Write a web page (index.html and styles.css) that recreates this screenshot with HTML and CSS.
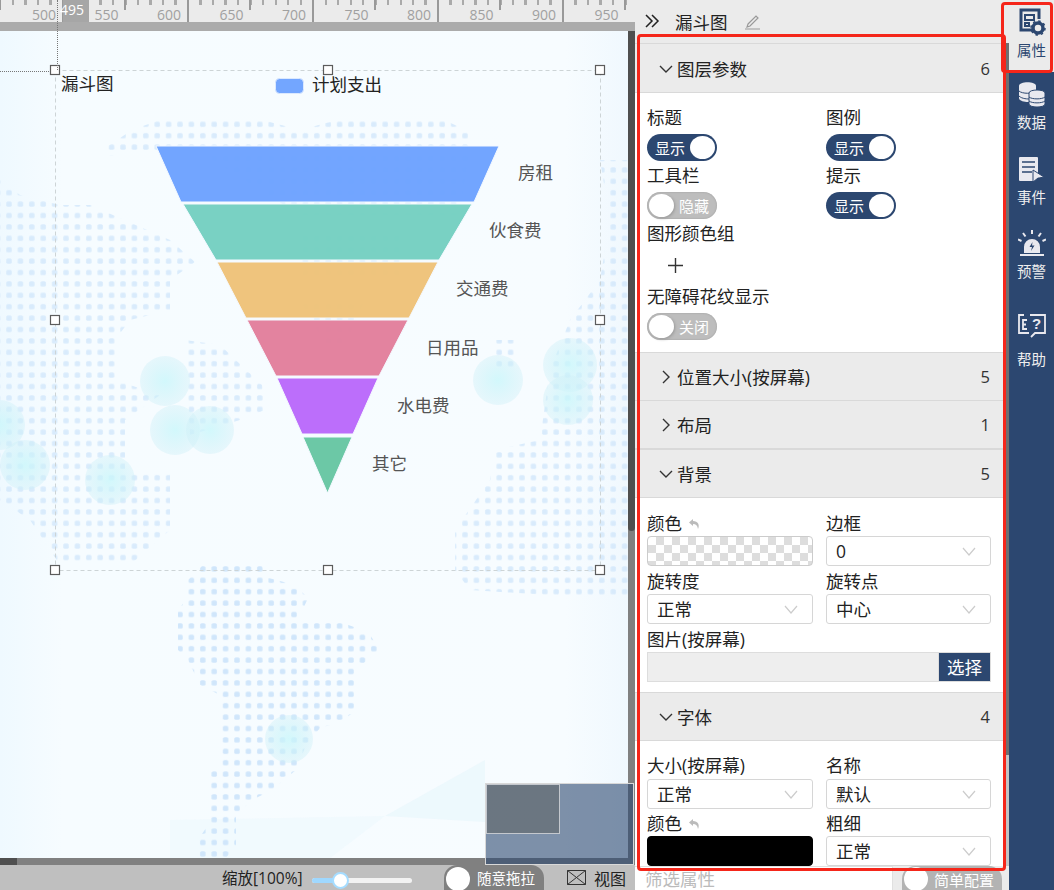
FILE: index.html
```html
<!DOCTYPE html>
<html lang="zh-CN">
<head>
    <meta charset="UTF-8">
    <title>漏斗图</title>
    <link rel="stylesheet" href="styles.css">
</head>
<body>
<div class="app">
    <div class="stage">
        <div class="ruler">
            <span>500</span><span>550</span><span>600</span><span>650</span><span>700</span>
            <span>750</span><span>800</span><span>850</span><span>900</span><span>950</span>
        </div>
        <div class="ruler-band"></div>
        <div class="canvas-row">
            <div class="canvas">
                <svg class="chart" viewBox="0 31 628 827" width="628" height="827">
                    <defs>
                        <pattern id="dots" width="11.4" height="11.4" patternUnits="userSpaceOnUse" patternTransform="translate(3.3 4.6)">
                            <rect x="3" y="3" width="5.4" height="5.4" rx="1.500" fill="#d0e6fb"/>
                        </pattern>
                        <linearGradient id="sky" x1="0" y1="0" x2="1" y2="0">
                            <stop offset="0" stop-color="#eff9ff"/>
                            <stop offset="0.1" stop-color="#f6fcff"/>
                            <stop offset="0.9" stop-color="#f7fcff"/>
                            <stop offset="1" stop-color="#f0f8fe"/>
                        </linearGradient>
                        <radialGradient id="glow">
                            <stop offset="0" stop-color="#c9f7fb" stop-opacity="0.8"/>
                            <stop offset="1" stop-color="#cdeff7" stop-opacity="0.4"/>
                        </radialGradient>
                        <filter id="soft" x="0" y="0" width="100%" height="100%">
                            <feGaussianBlur stdDeviation="0.6"/>
                        </filter>
                    </defs>
                    <rect x="0" y="31" width="628" height="827" fill="url(#sky)"/>
                    <polygon points="170,820 385,816 330,858 170,858" fill="#e6f6fc" fill-opacity="0.3"/>
                    <polygon points="385,816 485,760 485,822" fill="#e3f5fc" fill-opacity="0.5"/>
                    <g fill="url(#dots)" filter="url(#soft)" opacity="0.75">
                        <!-- top continent, seen through the funnel as well -->
                        <polygon points="165,118 255,118 300,130 345,118 440,118 470,132 470,145 460,215 300,215 190,146 108,156 108,146 132,130"/>
                        <polygon points="300,232 400,232 400,276 300,276"/>
                        <polygon points="300,300 365,300 345,345 325,345"/>
                        <!-- left continent -->
                        <polygon points="0,180 20,195 60,205 90,205 170,240 195,262 170,280 170,310 130,320 115,340 115,380 160,395 125,420 125,470 170,470 170,530 130,565 60,565 30,520 0,500"/>
                        <polygon points="185,340 220,345 262,385 265,410 240,420 190,435"/>
                        <!-- right continent -->
                        <polygon points="600,160 628,160 628,600 470,590 455,570 455,530 490,480 495,450 540,440 550,370 570,320 600,280 610,220"/>
                        <polygon points="495,340 515,340 515,370 495,370"/>
                    </g>
                    <g fill="url(#dots)" filter="url(#soft)">
                        <!-- lower continent -->
                        <polygon points="203,565 262,565 265,577 295,585 308,598 298,620 340,622 368,632 380,650 365,662 354,675 354,712 340,722 320,728 306,745 296,770 272,790 252,800 236,815 236,845 226,858 198,858 198,840 208,825 208,775 220,765 220,695 200,685 188,660 178,650 178,610 186,600 186,582"/>
                    </g>
                    <g fill="url(#glow)">
                        <circle cx="165" cy="381" r="25"/>
                        <circle cx="175" cy="430" r="25"/>
                        <circle cx="210" cy="430" r="24"/>
                        <circle cx="25" cy="465" r="25"/>
                        <circle cx="110" cy="480" r="25"/>
                        <circle cx="0" cy="425" r="25"/>
                        <circle cx="498" cy="380" r="25"/>
                        <circle cx="570" cy="365" r="27"/>
                        <circle cx="568" cy="400" r="25"/>
                        <circle cx="289" cy="739" r="24"/>
                    </g>

                    <g stroke="#f4f9ff" stroke-width="1" fill-opacity="0.97">
                        <polygon points="156,146 499,146 474,202 181,202" fill="#6da2ff"/>
                        <polygon points="183,204 472,204 439,260 216,260" fill="#75d0c1"/>
                        <polygon points="217,262 438,262 409,318 246,318" fill="#eec279"/>
                        <polygon points="247,320 408,320 379,376 276,376" fill="#e27f9c"/>
                        <polygon points="277,378 378,378 353,434 302,434" fill="#ba69fb"/>
                        <polygon points="303,437 352,437 327.5,493" fill="#67c6a3"/>
                    </g>
                    <g class="funnel-labels">
                        <text x="518" y="179">房租</text>
                        <text x="489" y="237">伙食费</text>
                        <text x="456" y="295">交通费</text>
                        <text x="426" y="354">日用品</text>
                        <text x="397" y="412">水电费</text>
                        <text x="372" y="470">其它</text>
                    </g>
                    <text class="chart-title" x="61" y="90">漏斗图</text>
                    <rect x="275.500" y="78.500" width="28" height="15" rx="4" fill="#73a6ff" stroke="#dbe9ff"/>
                    <text class="chart-title" x="312" y="91">计划支出</text>

                    <rect x="55.500" y="70.500" width="545" height="500" fill="none" stroke="#cdd4d6" stroke-dasharray="4 3"/>
                    <path d="M0 71.500H55" stroke="#777" stroke-dasharray="1 1" fill="none"/>
                    <g fill="#fff" stroke="#5c5c5c" stroke-width="1.200">
                        <rect x="50.500" y="65.500" width="9" height="9"/>
                        <rect x="323.500" y="65.500" width="9" height="9"/>
                        <rect x="595.500" y="65.500" width="9" height="9"/>
                        <rect x="50.500" y="315.500" width="9" height="9"/>
                        <rect x="595.500" y="315.500" width="9" height="9"/>
                        <rect x="50.500" y="565.500" width="9" height="9"/>
                        <rect x="323.500" y="565.500" width="9" height="9"/>
                        <rect x="595.500" y="565.500" width="9" height="9"/>
                    </g>
                </svg>
            </div>
            <div class="vbar"><div class="vbar-thumb"></div></div>
        </div>
        <div class="hbar"><div class="hbar-thumb"></div></div>
        <div class="statusbar">
            <span class="zoom-text">缩放[100%]</span>
            <div class="slider"><div class="slider-fill"></div><div class="slider-knob"></div></div>
            <div class="drag-toggle"><i class="knob"></i>随意拖拉</div>
            <svg class="view-icon" width="19" height="15" viewBox="0 0 19 15">
                <path d="M.5.5h18v14H.5zM.5.5l18 14M18.5.5L.5 14.5" fill="none" stroke="#333"/>
            </svg>
            <span class="view-text">视图</span>
        </div>
        <div class="guide-v"></div>
        <div class="ruler-badge">495</div>
        <div class="minimap"><div class="minimap-view"></div></div>
    </div>

    <div class="panel">
        <div class="panel-top">
            <svg width="16" height="14" viewBox="0 0 16 14"><path d="M2 1l6 6-6 6M8 1l6 6-6 6" fill="none" stroke="#222" stroke-width="1.5"/></svg>
            <span class="panel-name">漏斗图</span>
            <svg width="17" height="17" viewBox="0 0 17 17"><path d="M4 11l8-8 2 2-8 8-3 1zM1 16h15" fill="none" stroke="#999" stroke-width="1.2"/></svg>
        </div>
        <div class="props">
            <div class="sec-head first">
                <svg class="chev" width="14" height="14" viewBox="0 0 14 14"><path d="M1 4l6 6 6-6"/></svg>
                <span class="sec-title">图层参数</span><span class="sec-count">6</span>
            </div>
            <div class="sec-body layer-body">
                <div class="field-grid">
                    <div class="field">
                        <label>标题</label>
                        <div class="switch on">显示<i class="knob"></i></div>
                    </div>
                    <div class="field">
                        <label>图例</label>
                        <div class="switch on">显示<i class="knob"></i></div>
                    </div>
                    <div class="field">
                        <label>工具栏</label>
                        <div class="switch"><i class="knob"></i>隐藏</div>
                    </div>
                    <div class="field">
                        <label>提示</label>
                        <div class="switch on">显示<i class="knob"></i></div>
                    </div>
                </div>
                <label>图形颜色组</label>
                <div class="plus-row">
                    <svg width="15" height="15" viewBox="0 0 15 15"><path d="M7.5 0v15M0 7.5h15" stroke="#333" stroke-width="1.4"/></svg>
                </div>
                <label>无障碍花纹显示</label>
                <div class="switch"><i class="knob"></i>关闭</div>
            </div>

            <div class="sec-head">
                <svg class="chev" width="14" height="14" viewBox="0 0 14 14"><path d="M4 1l6 6-6 6"/></svg>
                <span class="sec-title">位置大小(按屏幕)</span><span class="sec-count">5</span>
            </div>
            <div class="sec-head">
                <svg class="chev" width="14" height="14" viewBox="0 0 14 14"><path d="M4 1l6 6-6 6"/></svg>
                <span class="sec-title">布局</span><span class="sec-count">1</span>
            </div>
            <div class="sec-head second">
                <svg class="chev" width="14" height="14" viewBox="0 0 14 14"><path d="M1 4l6 6 6-6"/></svg>
                <span class="sec-title">背景</span><span class="sec-count">5</span>
            </div>
            <div class="sec-body bg-body">
                <div class="field-grid">
                    <div class="field">
                        <label>颜色 <svg class="undo" width="13" height="13" viewBox="0 0 13 13"><path d="M5 1L1 4.5 5 8V6c3 0 4.500 1.500 5 5 2-4 0-8-5-8z" fill="#bbb"/></svg></label>
                        <div class="swatch checker"></div>
                    </div>
                    <div class="field">
                        <label>边框</label>
                        <div class="select">0<svg class="sel-arrow" width="14" height="9" viewBox="0 0 14 9"><path d="M1 1l6 7 6-7"/></svg></div>
                    </div>
                    <div class="field">
                        <label>旋转度</label>
                        <div class="select">正常<svg class="sel-arrow" width="14" height="9" viewBox="0 0 14 9"><path d="M1 1l6 7 6-7"/></svg></div>
                    </div>
                    <div class="field">
                        <label>旋转点</label>
                        <div class="select">中心<svg class="sel-arrow" width="14" height="9" viewBox="0 0 14 9"><path d="M1 1l6 7 6-7"/></svg></div>
                    </div>
                </div>
                <label>图片(按屏幕)</label>
                <div class="file-row">
                    <div class="file-input"></div>
                    <div class="file-btn">选择</div>
                </div>
            </div>

            <div class="sec-head">
                <svg class="chev" width="14" height="14" viewBox="0 0 14 14"><path d="M1 4l6 6 6-6"/></svg>
                <span class="sec-title">字体</span><span class="sec-count">4</span>
            </div>
            <div class="sec-body font-body">
                <div class="field-grid">
                    <div class="field">
                        <label>大小(按屏幕)</label>
                        <div class="select">正常<svg class="sel-arrow" width="14" height="9" viewBox="0 0 14 9"><path d="M1 1l6 7 6-7"/></svg></div>
                    </div>
                    <div class="field">
                        <label>名称</label>
                        <div class="select">默认<svg class="sel-arrow" width="14" height="9" viewBox="0 0 14 9"><path d="M1 1l6 7 6-7"/></svg></div>
                    </div>
                    <div class="field">
                        <label>颜色 <svg class="undo" width="13" height="13" viewBox="0 0 13 13"><path d="M5 1L1 4.5 5 8V6c3 0 4.500 1.500 5 5 2-4 0-8-5-8z" fill="#bbb"/></svg></label>
                        <div class="swatch black"></div>
                    </div>
                    <div class="field">
                        <label>粗细</label>
                        <div class="select">正常<svg class="sel-arrow" width="14" height="9" viewBox="0 0 14 9"><path d="M1 1l6 7 6-7"/></svg></div>
                    </div>
                </div>
            </div>
            <div class="props-scroll"></div>
        </div>
        <div class="filter-bar">
            <div class="filter-input">筛选属性</div>
            <div class="simple-toggle"><i class="knob"></i>简单配置</div>
        </div>
    </div>

    <div class="nav">
        <div class="nav-item active">
            <svg width="28" height="28" viewBox="0 0 28 28">
                <path d="M14 22H3V2h18v9" fill="none" stroke="#2c4770" stroke-width="3"/>
                <path d="M7 7h9v5H7zM7 15h4v3H7z" fill="none" stroke="#2c4770" stroke-width="2"/>
                <circle cx="20" cy="20" r="5" fill="none" stroke="#2c4770" stroke-width="3.500"/>
                <circle cx="20" cy="20" r="7" fill="none" stroke="#2c4770" stroke-width="1.500" stroke-dasharray="2.500 3"/>
            </svg>
            <span>属性</span>
        </div>
        <div class="nav-item">
            <svg width="28" height="26" viewBox="0 0 28 26">
                <path d="M1 4c0-5 17-5 17 0v12c0 3-6 4-8.500 4S1 19 1 16z" fill="#e9e9ef"/>
                <path d="M1 9c3 3 14 3 17 0M1 14c3 3 9 3 11 3" fill="none" stroke="#2c4770"/>
                <path d="M11 11c0-4 16-4 16 0v11c0 4-16 4-16 0z" fill="#e9e9ef" stroke="#2c4770"/>
                <path d="M11 15c3 2.500 13 2.500 16 0M11 19c3 2.500 13 2.500 16 0" fill="none" stroke="#2c4770"/>
            </svg>
            <span>数据</span>
        </div>
        <div class="nav-item">
            <svg width="28" height="27" viewBox="0 0 28 27">
                <path d="M2 1h17a1 1 0 0 1 1 1v17l-4 6H2a1 1 0 0 1-1-1V2a1 1 0 0 1 1-1z" fill="#e9e9ef"/>
                <path d="M4 6h13M4 11h13M4 16h10" stroke="#2c4770" stroke-width="1.500"/>
                <path d="M15 14l11 7-5 1-1 0-5 4z" fill="#e9e9ef" stroke="#2c4770"/>
            </svg>
            <span>事件</span>
        </div>
        <div class="nav-item">
            <svg width="28" height="27" viewBox="0 0 28 27">
                <path d="M6 23v-6a8 8 0 0 1 16 0v6zM2 24h24v2H2z" fill="#e9e9ef"/>
                <path d="M14.500 12l-3 5h2.500l-1 4 3.500-5.500h-2.500z" fill="#2c4770"/>
                <path d="M14 0v4M5 3l2.500 3.500M23 3l-2.500 3.500M0 9.500l3.500 1.500M28 9.500L24.500 11" stroke="#e9e9ef" stroke-width="2"/>
            </svg>
            <span>预警</span>
        </div>
        <div class="nav-item help">
            <svg width="28" height="25" viewBox="0 0 28 25">
                <path d="M6 1H1v18h10M12 1h15v18H17l-4 4" fill="none" stroke="#e9e9ef" stroke-width="1.800"/>
                <path d="M9 6H5v9h4M5 10.500h3" fill="none" stroke="#e9e9ef" stroke-width="1.800"/>
                <text class="help-mark" x="14" y="15">?</text>
            </svg>
            <span>帮助</span>
        </div>
    </div>

    <div class="mark mark-props"></div>
    <div class="mark mark-tab"></div>
</div>
</body>
</html>
```

FILE: styles.css
```css
* {
    margin: 0;
    padding: 0;
    box-sizing: border-box;
}

body {
    font-family: "Open Sans", "Noto Sans CJK SC", sans-serif;
    font-size: 17.5px;
    color: #222;
    overflow: hidden;
}

.app {
    position: relative;
    display: flex;
    width: 1054px;
    height: 890px;
    overflow: hidden;
}

/* left side: ruler, canvas, status */
.stage {
    position: relative;
    display: flex;
    flex-direction: column;
    width: 635px;
    flex: none;
}

.ruler {
    display: flex;
    height: 22px;
    padding-left: 0.5px;
    background-color: #ebebeb;
    background-image:
        repeating-linear-gradient(90deg, #999 0 2px, transparent 2px 125px),
        repeating-linear-gradient(90deg, #999 0 2px, transparent 2px 62.5px),
        repeating-linear-gradient(90deg, #aaa 0 2px, transparent 2px 12.5px);
    background-size: 100% 100%, 100% 10px, 100% 5px;
    background-position: 62px 0, -0.5px 0, -0.5px 0;
    background-repeat: no-repeat;
    font-size: 14px;
    line-height: 19px;
    color: #a0a0a0;
}

.ruler span {
    flex: none;
    width: 62.500px;
    padding-top: 5px;
    padding-right: 7px;
    text-align: right;
}

.ruler-band {
    height: 9px;
    background: #ababab;
}

.canvas-row {
    display: flex;
    height: 827px;
}

.canvas {
    width: 628px;
    flex: none;
    overflow: hidden;
}

.chart {
    display: block;
}

.funnel-labels text {
    font-size: 17.5px;
    fill: #555;
}

.chart-title {
    font-size: 17.5px;
    fill: #222;
}

.vbar {
    flex: 1;
    background: #808080;
}

.vbar-thumb {
    height: 500px;
    background: #4f4f4f;
    border-radius: 0 0 4px 4px;
}

.hbar {
    height: 7px;
    background: #808080;
}

.hbar-thumb {
    width: 17px;
    height: 7px;
    background: #4f4f4f;
}

.statusbar {
    position: relative;
    display: flex;
    align-items: center;
    height: 25px;
    padding-left: 222px;
    background: #bfbfbf;
    font-size: 15.5px;
}

.zoom-text {
    width: 90px;
    flex: none;
    white-space: nowrap;
}

.slider {
    position: relative;
    width: 100px;
    height: 5px;
    flex: none;
    margin-top: 5px;
    border-radius: 3px;
    background: #f2f2f2;
}

.slider-fill {
    width: 28px;
    height: 5px;
    border-radius: 3px;
    background: #9fd8ff;
}

.slider-knob {
    position: absolute;
    left: 20px;
    top: -6px;
    width: 17px;
    height: 17px;
    border: 2px solid #a5dcff;
    border-radius: 50%;
    background: #fff;
}

.drag-toggle {
    display: flex;
    align-items: center;
    gap: 7px;
    width: 100px;
    height: 25px;
    flex: none;
    margin-left: 32px;
    padding-left: 2px;
    border-radius: 13px 13px 0 0;
    background: #808080;
    color: #fff;
    font-size: 14.5px;
    white-space: nowrap;
}

.drag-toggle .knob {
    width: 24px;
    height: 24px;
    margin-top: 3px;
}

.view-icon {
    flex: none;
    margin-left: 23px;
}

.view-text {
    margin-left: 8px;
    font-size: 16px;
}

.knob {
    display: block;
    flex: none;
    border-radius: 50%;
    background: #fff;
}

.guide-v {
    position: absolute;
    left: 57px;
    top: 0;
    height: 70px;
    border-left: 1px dotted #777;
}

.ruler-badge {
    position: absolute;
    left: 63px;
    top: 0;
    width: 26px;
    height: 22px;
    background: #a6a6a6;
    color: #fff;
    font-size: 14px;
    line-height: 20px;
    text-indent: -3px;
    white-space: nowrap;
}

.minimap {
    position: absolute;
    left: 485px;
    top: 783px;
    width: 149px;
    height: 82px;
    border: 1px solid #d8d8d8;
    background: rgba(44, 71, 112, 0.6);
}

.minimap-view {
    width: 74px;
    height: 50px;
    border: 1px solid #c4c8ce;
    background: rgba(80, 80, 70, 0.4);
}

/* properties panel */
.panel {
    display: flex;
    flex-direction: column;
    width: 374px;
    flex: none;
    background: #ebebeb;
}

.panel-top {
    display: flex;
    align-items: center;
    height: 43px;
    padding: 0 0 1px 9px;
}

.panel-name {
    margin: 0 16px 0 15px;
}

.props {
    position: relative;
    height: 823px;
    padding-right: 4px;
    overflow: hidden;
    background: #c4c4c4;
}

.props-scroll {
    position: absolute;
    right: 0;
    top: 0;
    width: 4px;
    height: 712px;
    background: #6f6f6f;
}

.sec-head {
    display: flex;
    align-items: center;
    height: 49px;
    padding: 0 15px 0 24px;
    border-top: 1px solid #d9d9d9;
    border-bottom: 1px solid #d9d9d9;
    margin-bottom: -1px;
    background: #ebebeb;
}

.sec-head.first {
    height: 50px;
    padding-top: 1px;
}

.sec-head.second {
    margin-top: 1px;
}

.chev {
    flex: none;
    fill: none;
    stroke: #333;
    stroke-width: 1.400;
}

.sec-title {
    flex: 1;
    margin-left: 4px;
}

.sec-count {
    color: #333;
    font-size: 16.5px;
}

.sec-body {
    padding: 12px 12px 0;
    background: #fff;
}

.layer-body {
    height: 259px;
    margin-top: 1px;
}

.bg-body {
    height: 194px;
    margin-top: 1px;
    padding-top: 13px;
}

.font-body {
    height: 200px;
    margin-top: 1px;
    padding-top: 12px;
}

.sec-body label {
    display: block;
    height: 25px;
    line-height: 25px;
    white-space: nowrap;
}

.undo {
    margin-left: 1px;
    vertical-align: -1px;
}

.field-grid {
    display: grid;
    grid-template-columns: 166px 165px;
    column-gap: 13px;
}

.field {
    height: 58px;
}

.font-body .field:nth-child(-n+2) .select {
    margin-top: 1px;
}

.switch {
    display: flex;
    align-items: center;
    justify-content: space-between;
    width: 70px;
    height: 27px;
    margin-top: 4px;
    padding: 0 2px 0 8px;
    border-radius: 14px;
    background: #bdbdbd;
    color: #fff;
    font-size: 15px;
}

.switch.on {
    background: #2c4770;
}

.switch:not(.on) {
    padding: 0 8px 0 2px;
    box-shadow: inset 0 0 2px #999;
}

.switch .knob {
    width: 25px;
    height: 23px;
}

.switch:not(.on) .knob {
    box-shadow: 1px 1px 3px #999;
}

.plus-row {
    display: flex;
    align-items: center;
    height: 38px;
    padding-left: 21px;
}

.swatch {
    height: 30px;
    border-radius: 4px;
    border: 1px solid #ccc;
}

.checker {
    background-color: #fff;
    background-image:
        linear-gradient(45deg, #ddd 25%, transparent 25% 75%, #ddd 75%),
        linear-gradient(45deg, #ddd 25%, transparent 25% 75%, #ddd 75%);
    background-size: 16px 16px;
    background-position: 0 0, 8px 8px;
}

.black {
    background: #000;
    border-color: #000;
}

.select {
    position: relative;
    height: 30px;
    padding-left: 9px;
    border: 1px solid #d6d6d6;
    border-radius: 3px;
    background: #fff;
    line-height: 29px;
}

.sel-arrow {
    position: absolute;
    right: 14px;
    top: 10px;
    fill: none;
    stroke: #ccc;
    stroke-width: 1.200;
}

.file-row {
    display: flex;
    height: 30px;
    width: 344px;
}

.file-input {
    flex: 1;
    border: 1px solid #ddd;
    background: #eee;
}

.file-btn {
    width: 52px;
    border: 1px solid #ddd;
    border-left-width: 0;
    background: #2c4770;
    color: #fff;
    text-align: center;
    line-height: 29px;
}

.filter-bar {
    display: flex;
    height: 24px;
    background: #ebebeb;
}

.filter-input {
    width: 258px;
    height: 24px;
    padding-left: 10px;
    border-top: 1px solid #e0e0e0;
    border-right: 1px solid #e0e0e0;
    background: #fff;
    color: #bbb;
    line-height: 24px;
}

.simple-toggle {
    display: flex;
    align-items: center;
    gap: 6px;
    width: 100px;
    height: 24px;
    margin-left: 9px;
    padding-left: 2px;
    padding-top: 2px;
    border-radius: 13px 13px 0 0;
    background: #b3b3b3;
    color: #fff;
    font-size: 15px;
    white-space: nowrap;
}

.simple-toggle .knob {
    width: 24px;
    height: 24px;
}

/* right icon column */
.nav {
    flex: 1;
    background: #2c4770;
}

.nav-item {
    display: flex;
    flex-direction: column;
    align-items: center;
    height: 74px;
    padding-top: 10px;
    color: #eee;
    font-size: 14.500px;
    line-height: 22px;
}

.nav-item svg {
    display: block;
    flex: none;
    margin-bottom: 4px;
}

.nav-item.active {
    height: 72px;
    background: #ebebeb;
    color: #2c4770;
    padding-top: 8px;
}

.nav-item.help {
    margin-top: 10px;
}

.nav-item.help svg {
    margin-bottom: 10px;
}

.help-mark {
    font-family: "Liberation Sans", sans-serif;
    font-size: 15px;
    font-weight: 700;
    fill: #e9e9ef;
}

/* red annotation boxes drawn over the screenshot */
.mark {
    position: absolute;
    border: 3px solid #f5261a;
    border-radius: 4px;
}

.mark-props {
    left: 637px;
    top: 34px;
    width: 369px;
    height: 837px;
}

.mark-tab {
    left: 1001px;
    top: 2px;
    width: 52px;
    height: 71px;
}
```
